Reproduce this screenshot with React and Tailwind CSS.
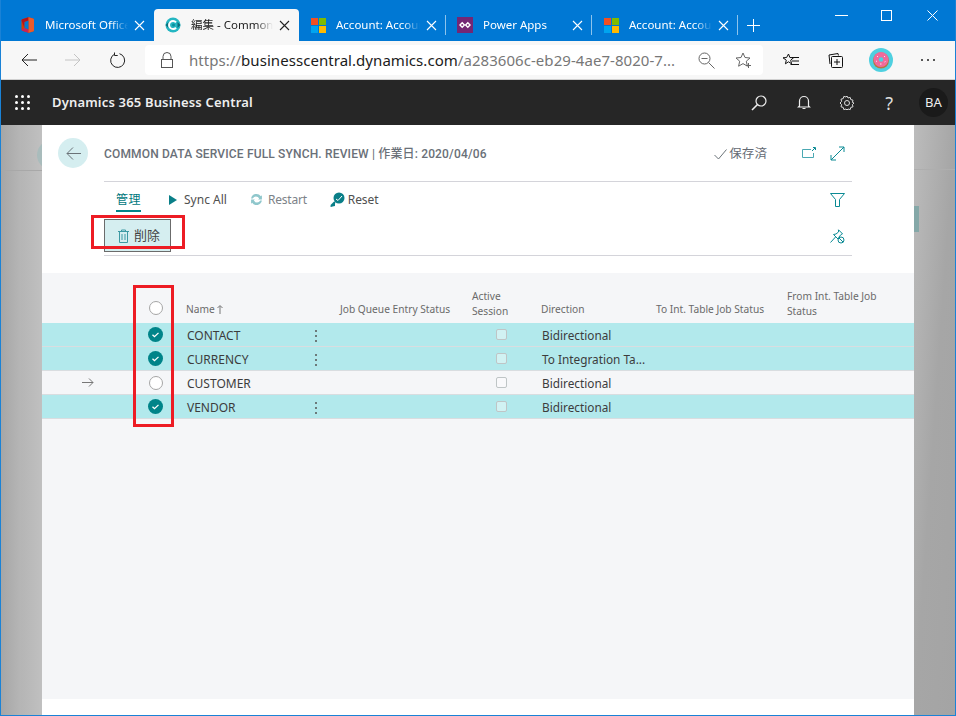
import React from "react";

const sans = "font-['Noto_Sans','Noto_Sans_CJK_JP',sans-serif]";

function X({ c = "#fff" }) {
  return (
    <svg width="11" height="11" viewBox="0 0 11 11" className="shrink-0">
      <path d="M1 1l9 9M10 1l-9 9" stroke={c} strokeWidth="1.1" fill="none" />
    </svg>
  );
}

function MsLogo() {
  return (
    <svg width="15" height="15" viewBox="0 0 15 15" className="shrink-0">
      <rect width="7" height="7" fill="#f25022" />
      <rect x="8" width="7" height="7" fill="#7fba00" />
      <rect y="8" width="7" height="7" fill="#00a4ef" />
      <rect x="8" y="8" width="7" height="7" fill="#ffb900" />
    </svg>
  );
}

function OfficeLogo() {
  return (
    <svg width="13" height="16" viewBox="0 0 13 16" className="shrink-0">
      <path d="M0.500 3.500Q0.500 2.700 1.300 2.300L7.500 0.300L12 1.500Q13 1.800 13 2.800V13.200Q13 14.200 12 14.500L7.500 15.700L1.300 13.700Q0.500 13.300 0.500 12.500z" fill="#d83b01" />
      <path d="M0.500 3.500Q0.500 2.700 1.300 2.300L7.500 0.300V3.500L3.500 5V11z" fill="#b5121b" />
      <path d="M0.500 12.500L3.500 11L7.500 12.500V15.700L1.300 13.700Q0.500 13.300 0.500 12.500z" fill="#c7235a" />
      <path d="M7.500 0.300L12 1.500Q13 1.800 13 2.800V13.200Q13 14.200 12 14.500L7.500 15.700z" fill="#eb5b2a" />
      <path d="M3.500 5L7.500 3.500V12.500L3.500 11z" fill="#0078d4" />
    </svg>
  );
}

function BcLogo() {
  return (
    <svg width="16" height="16" viewBox="0 0 16 16" className="shrink-0">
      <circle cx="8" cy="8" r="7.500" fill="#25b6c2" />
      <path d="M0.500 8L3.500 5V11zM15.500 8L12.500 5V11z" fill="#0b6f7c" />
      <path d="M11 5.300A4 4 0 1 0 11 10.700" stroke="#fff" strokeWidth="2" fill="none" />
      <circle cx="8.500" cy="8" r="1.500" fill="#0b8f9c" />
    </svg>
  );
}

function PowerLogo() {
  return (
    <svg width="16" height="16" viewBox="0 0 16 16" className="shrink-0">
      <rect width="16" height="16" fill="#742774" />
      <path d="M3 8l2.200-2.200L7.400 8l-2.200 2.200zM8.600 8l2.200-2.200L13 8l-2.200 2.200z" fill="none" stroke="#fff" strokeWidth="1.400" />
    </svg>
  );
}

function Tab({ w, logo, title, active, sep }) {
  return (
    <div
      className={
        "relative flex h-[32px] shrink-0 items-center rounded-t-[4px] pl-[4px] pr-[9px] " +
        (active ? "bg-[#f7f7f7] text-[#222]" : "text-white")
      }
      style={{ width: w }}
    >
      <div className="flex w-[30px] shrink-0 items-center justify-center">{logo}</div>
      <span className="min-w-0 flex-1 overflow-hidden whitespace-nowrap pl-[3px] text-[11.500px] leading-[16px] [mask-image:linear-gradient(to_right,black_80%,transparent)]">{title}</span>
      <div className="ml-[6px]">
        <X c={active ? "#222" : "#fff"} />
      </div>
      {sep && <div className="absolute right-0 top-[6px] h-[20px] w-px bg-[#8dc4ec]" />}
    </div>
  );
}

function Donut() {
  return (
    <svg width="24" height="24" viewBox="0 0 24 24">
      <circle cx="12" cy="12" r="12" fill="#4fd0e0" />
      <circle cx="12" cy="12.500" r="8" fill="#b5763f" />
      <circle cx="12" cy="11.500" r="7.500" fill="#f06a9b" />
      <circle cx="12" cy="11.500" r="2.300" fill="#4fd0e0" />
      <path d="M8 8l1 1M15 8l1 1M7 13l1 .5M15.500 14l1-.5M11 16l1.500 0" stroke="#fff" strokeWidth="0.800" />
    </svg>
  );
}

function Stroke({ w, h, vb, d, c = "#0a8a94", sw = 1, className = "" }) {
  return (
    <svg width={w} height={h} viewBox={vb || `0 0 ${w} ${h}`} className={"shrink-0 " + className}>
      <path d={d} stroke={c} strokeWidth={sw} fill="none" />
    </svg>
  );
}

function RadioOff() {
  return <div className="h-[14px] w-[14px] rounded-full border border-[#a6a6a6] bg-white" />;
}
function RadioOn() {
  return (
    <svg width="15" height="15" viewBox="0 0 15 15">
      <circle cx="7.500" cy="7.500" r="7.500" fill="#008489" />
      <path d="M4.500 7.700l2 2 4-3.800" stroke="#fff" strokeWidth="1.300" fill="none" />
    </svg>
  );
}
function Box() {
  return <div className="h-[11px] w-[11px] rounded-[2px] border border-[#bfc5c6] bg-white/40" />;
}

const rows = [
  { name: "CONTACT", dir: "Bidirectional", sel: true },
  { name: "CURRENCY", dir: "To Integration Ta...", sel: true },
  { name: "CUSTOMER", dir: "Bidirectional", sel: false, cur: true },
  { name: "VENDOR", dir: "Bidirectional", sel: true },
];

const grid = "grid grid-cols-[93px_43px_127px_23px_132px_70px_114px_131px_1fr]";

export default function App() {
  return (
    <div className={"relative flex h-[716px] w-[956px] flex-col overflow-hidden border-x border-b border-[#1a82d6] bg-[#0078d4] " + sans}>
      {/* Browser tabs */}
      <div className="flex h-[41px] shrink-0 items-end bg-[#0078d4] pl-[7px]">
        <Tab w={146} logo={<OfficeLogo />} title="Microsoft Office Home" />
        <Tab w={145} logo={<BcLogo />} title="編集 - Common Data Service" active />
        <Tab w={147} logo={<MsLogo />} title="Account: Account Details" sep />
        <Tab w={146} logo={<PowerLogo />} title="Power Apps" sep />
        <Tab w={146} logo={<MsLogo />} title="Account: Account Details" sep />
        <div className="flex h-[31px] w-[30px] items-center justify-center">
          <Stroke w={13} h={13} c="#fff" d="M6.500 0v13M0 6.500h13" />
        </div>
        <div className="ml-auto flex h-[41px] self-start">
          <div className="flex h-[30px] w-[45px] items-center justify-center">
            <Stroke w={13} h={11} c="#fff" d="M0 5.500h13" />
          </div>
          <div className="flex h-[30px] w-[46px] items-center justify-center">
            <div className="h-[11px] w-[11px] -translate-x-[1px] border border-white" />
          </div>
          <div className="flex h-[30px] w-[45px] items-center justify-center">
            <Stroke w={11} h={11} c="#fff" d="M0.500 0.500l10 10M10.500 0.500l-10 10" />
          </div>
        </div>
      </div>

      {/* Address toolbar */}
      <div className="flex h-[39px] shrink-0 items-center border-b border-[#d0d0d0] bg-[#f7f7f7]">
        <div className="flex w-[144px] shrink-0 items-center">
          <div className="flex w-[56px] justify-center">
            <Stroke w={16} h={14} c="#222" d="M16 7H1M7 1L1 7l6 6" />
          </div>
          <div className="flex w-[32px] justify-center">
            <Stroke w={16} h={14} c="#c4c4c4" d="M0 7h15M9 1l6 6-6 6" />
          </div>
          <div className="flex w-[56px] justify-center">
            <svg width="17" height="17" viewBox="0 0 17 17">
              <path d="M5.500 2.200A7 7 0 1 0 10.500 1.700M5.500 0.500v3h3.200" stroke="#222" strokeWidth="1" fill="none" />
            </svg>
          </div>
        </div>
        <div className="flex h-[30px] w-[618px] shrink-0 items-center rounded-[4px] bg-white">
          <div className="flex w-[44px] shrink-0 justify-center">
            <svg width="14" height="17" viewBox="0 0 14 17">
              <path d="M3 7V4.500a4 4 0 0 1 8 0V7" stroke="#555" fill="none" />
              <rect x="1.500" y="7.500" width="11" height="8" stroke="#555" fill="none" />
            </svg>
          </div>
          <div className="min-w-0 flex-1 whitespace-nowrap text-[15px] tracking-[0.05px] text-[#777]">
            https://<span className="text-[#1b1b1b]">businesscentral.dynamics.com</span>/a283606c-eb29-4ae7-8020-7...
          </div>
          <div className="flex shrink-0 items-center pr-[11px]">
            <svg width="17" height="17" viewBox="0 0 17 17" className="mr-[21px]">
              <circle cx="6.500" cy="6.500" r="5.500" stroke="#666" fill="none" />
              <path d="M3.500 6.500h6M10.500 10.500l6 6" stroke="#666" fill="none" />
            </svg>
            <svg width="16" height="16" viewBox="0 0 16 16">
              <path d="M7 1l2 4.500 5 .5-3.700 3.200 1.100 5L7 11.600 2.600 14.200l1.100-5L0 6l5-.5z" stroke="#666" fill="none" />
              <path d="M12.500 11v5M10 13.500h5" stroke="#666" fill="none" />
            </svg>
          </div>
        </div>
        <div className="flex flex-1 items-center">
          <svg width="16" height="15" viewBox="0 0 16 15" className="ml-[20px]">
            <path d="M5.500 1l1.400 3.500 3.600.3-2.800 2.400.9 3.600-3.100-2-3.100 2 .9-3.600L0 4.800l3.600-.3z" stroke="#111" fill="#f7f7f7" />
            <path d="M8.500 4.500H16M9 8h7M7.500 11.500H16" stroke="#111" fill="none" />
          </svg>
          <svg width="16" height="16" viewBox="0 0 16 16" className="ml-[29px]">
            <path d="M2 12L1 3l9-1.500.4 2" stroke="#111" fill="none" />
            <rect x="3.500" y="4.500" width="11" height="11" rx="1" stroke="#111" fill="#f7f7f7" />
            <path d="M9 7v6M6 10h6" stroke="#111" fill="none" />
          </svg>
          <div className="ml-[25px]"><Donut /></div>
          <div className="ml-[28px] flex gap-[4px]">
            <span className="h-[2px] w-[2px] rounded-full bg-[#222]" />
            <span className="h-[2px] w-[2px] rounded-full bg-[#222]" />
            <span className="h-[2px] w-[2px] rounded-full bg-[#222]" />
          </div>
        </div>
      </div>

      {/* App bar */}
      <div className="flex h-[45px] shrink-0 items-center bg-[#262626] text-white">
        <div className="ml-[14px] grid w-[15px] grid-cols-3 gap-[3px]">
          {Array.from({ length: 9 }).map((_, i) => (
            <span key={i} className="h-[3px] w-[3px] rounded-full bg-white" />
          ))}
        </div>
        <div className="ml-[22px] text-[13px] font-semibold tracking-[0.17px] text-[#eee]">Dynamics 365 Business Central</div>
        <div className="ml-auto flex items-center">
          <svg width="16" height="16" viewBox="0 0 16 16">
            <circle cx="10" cy="6" r="5" stroke="#eee" strokeWidth="1.200" fill="none" />
            <path d="M6.500 9.500L1 15" stroke="#eee" strokeWidth="1.600" fill="none" />
          </svg>
          <svg width="14" height="15" viewBox="0 0 14 15" className="ml-[30px]">
            <path d="M2.500 11V6a4.500 4.500 0 0 1 9 0v5l1 1H1.500zM5.500 13.500h3" stroke="#eee" strokeWidth="1.200" fill="none" />
          </svg>
          <svg width="16" height="16" viewBox="0 0 16 16" className="ml-[28px]">
            <circle cx="8" cy="8" r="2.500" stroke="#ddd" fill="none" />
            <path d="M8 1l1 2 2.200-.6.600 2.200 2.200.6-.6 2.200L15 8l-1.600 1.600.6 2.200-2.200.6-.6 2.200-2.200-.6L8 15l-1-1.000-2.200.6-.6-2.200-2.200-.6.6-2.200L1 8l1.600-1.600L2 4.200l2.200-.6.600-2.200 2.200.6z" stroke="#ddd" fill="none" />
          </svg>
          <span className="ml-[30px] text-[18px] leading-none text-[#ddd]">?</span>
          <div className="ml-[26px] mr-[7px] flex h-[29px] w-[29px] items-center justify-center rounded-full bg-[#1a1a1a] text-[13px] text-[#eee]">BA</div>
        </div>
      </div>

      {/* Page under the dialog */}
      <div className="relative flex min-h-0 flex-1 bg-[#b0b0b0]">
        <div className="relative flex w-[41px] shrink-0">
          <div className="w-[20px] bg-gradient-to-r from-[#a6a6a6] to-[#b6b6b6]" />
          <div className="flex-1 bg-gradient-to-r from-[#b5b5b5] to-[#c0c0c0]" />
          <div className="absolute inset-x-0 top-[45px] h-px bg-[#a8a8a8]" />
          <div className="absolute left-[36px] top-[15px] h-[30px] w-[30px] rounded-full bg-[#a9bcbc]" />
        </div>

        {/* Dialog */}
        <div className="relative z-10 flex w-[872px] shrink-0 flex-col bg-white">
          <div className="flex h-[56px] shrink-0 items-center pl-[16px] pr-[69px]">
            <div className="flex h-[30px] w-[30px] items-center justify-center rounded-full bg-[#d5eef0]">
              <Stroke w={15} h={13} c="#6b7378" d="M15 6.500H1M7 .5L1 6.500l6 6" />
            </div>
            <div className="ml-[16px] translate-y-[1px] whitespace-nowrap font-['Roboto','Noto_Sans_CJK_JP',sans-serif] text-[12px] font-medium tracking-[0.16px] text-[#6a7078]">
              COMMON DATA SERVICE FULL SYNCH. REVIEW | 作業日: 2020/04/06
            </div>
            <div className="ml-auto flex items-center">
              <Stroke w={13} h={11} c="#6b7378" d="M0.500 6l4 4L12.500 0.500" className="translate-x-[1px] translate-y-[1px]" />
              <span className="ml-[3px] translate-y-[1px] text-[12.500px] tracking-[0.1px] text-[#646a73]">保存済</span>
              <svg width="14" height="12" viewBox="0 0 14 12" className="ml-[34px] translate-x-[1px]">
                <path d="M9 2.500H.5v8h11V6" stroke="#4aa8b2" fill="none" />
                <path d="M10 4l3-3M11 .5h2.500V3" stroke="#0a8a94" fill="none" />
              </svg>
              <svg width="15" height="15" viewBox="0 0 15 15" className="ml-[15px]">
                <path d="M1 14L14 1M9 1h5v5M1 9v5h5" stroke="#0a8a94" strokeWidth="1" fill="none" />
              </svg>
            </div>
          </div>

          <div className="mx-[62px] h-[75px] shrink-0 border-y border-[#d4d4da]">
            <div className="flex h-[37px] items-center pb-[2px] pl-[12px] pr-[7px] text-[12px] text-[#505050]">
              <div className="relative text-[#00787d]">
                <span className="tracking-[0.5px]">管理</span>
                <div className="absolute -bottom-[3px] left-0 right-0 h-[2px] bg-[#008489]" />
              </div>
              <svg width="8" height="10" viewBox="0 0 8 10" className="ml-[28px]">
                <path d="M0 0l8 5-8 5z" fill="#0a7f88" />
              </svg>
              <span className="ml-[7px]">Sync All</span>
              <svg width="13" height="13" viewBox="0 0 12 12" className="ml-[23px]">
                <path d="M1 5A5 5 0 0 1 10 3l1-1v4H7.500l1-1A3.500 3.500 0 0 0 2.500 5zM11 7A5 5 0 0 1 2 9l-1 1V6h3.500l-1 1a3.500 3.500 0 0 0 6 0z" fill="#8fc7cc" />
              </svg>
              <span className="ml-[5px] tracking-[-0.2px] text-[#7c8288]">Restart</span>
              <svg width="15" height="15" viewBox="0 0 15 15" className="ml-[23px]">
                <circle cx="9" cy="6" r="5.500" fill="#0a7f88" />
                <path d="M6 7l2 1.500L12 4" stroke="#fff" fill="none" />
                <path d="M0 15l5-1V9.500z" fill="#0a7f88" />
                <path d="M1 14l4-4" stroke="#0a7f88" strokeWidth="2" />
              </svg>
              <span className="ml-[3px] tracking-[-0.1px]">Reset</span>
              <svg width="15" height="14" viewBox="0 0 15 14" className="ml-auto">
                <path d="M.5 .5h14L9.500 6.500V13.500h-4V6.500z" stroke="#0a8a94" fill="none" />
              </svg>
            </div>
            <div className="flex h-[36px] items-start pr-[7px]">
              <div className="flex h-[33px] w-[67px] items-center gap-[5px] border border-[#6b6b6b] bg-[#d5eef0] pl-[13px] text-[13px] text-[#444]">
                <svg width="11" height="14" viewBox="0 0 11 14" className="shrink-0">
                  <path d="M0 2.500h11M3.500 2.500V1h4v1.500M1.500 2.500v11h8v-11M4 5v6M7 5v6" stroke="#3d9aa4" fill="none" />
                </svg>
                <span className="whitespace-nowrap">削除</span>
              </div>
              <svg width="15" height="15" viewBox="0 0 15 15" className="ml-auto mt-[10px]">
                <path d="M8.500 .8l4 4-1.500.7-2 2.500-.5 2.500L3.500 5.500 6 5l2.500-2zM5.500 8l-5 5.500" stroke="#0a8a94" fill="none" />
                <circle cx="11" cy="11" r="3" stroke="#0a8a94" fill="#fff" />
                <path d="M9 9l4 4" stroke="#0a8a94" />
              </svg>
            </div>
          </div>

          <div className="h-[17px] shrink-0" />

          {/* List */}
          <div className="flex min-h-0 flex-1 flex-col bg-[#f5f6f8]">
            <div className={grid + " h-[50px] shrink-0 text-[10.200px] leading-[15px] text-[#6a6a6a]"}>
              <div />
              <div className="flex -translate-x-[1px] items-center justify-center pt-[20px]">
                <RadioOff />
              </div>
              <div className="flex items-center gap-[2px] self-end pb-[6px] pl-[8px]">
                Name
                <Stroke w={6} h={9} c="#777" d="M3 9V1M.5 3L3 .5 5.500 3" />
              </div>
              <div />
              <div className="self-end pb-[6px] pl-[12px]">Job Queue Entry Status</div>
              <div className="self-end pb-[4px] pl-[12px]">Active<br />Session</div>
              <div className="self-end pb-[6px] pl-[11px]">Direction</div>
              <div className="self-end pb-[6px] pl-[12px]">To Int. Table Job Status</div>
              <div className="self-end pb-[4px] pl-[12px]">From Int. Table Job<br />Status</div>
            </div>
            {rows.map((r) => (
              <div
                key={r.name}
                className={grid + " h-[24px] shrink-0 items-center border-b border-[#d9dde0] text-[12px] text-[#3c3c3c] " + (r.sel ? "bg-[#b2e9ec]" : "bg-[#f5f6f8]")}
              >
                <div className="flex -translate-x-[1px] justify-center">
                  {r.cur && <Stroke w={12} h={9} c="#777" d="M0 4.500h11M7 .5l4 4-4 4" />}
                </div>
                <div className="flex -translate-x-[1px] justify-center">{r.sel ? <RadioOn /> : <RadioOff />}</div>
                <div className="pl-[9px] pt-[2px]">{r.name}</div>
                <div className="flex -translate-x-[1px] flex-col items-center gap-[3px] pt-[2px]">
                  {r.sel && (
                    <>
                      <span className="h-[2px] w-[2px] rounded-full bg-[#555]" />
                      <span className="h-[2px] w-[2px] rounded-full bg-[#555]" />
                      <span className="h-[2px] w-[2px] rounded-full bg-[#555]" />
                    </>
                  )}
                </div>
                <div />
                <div className="flex justify-center pl-[12px]"><Box /></div>
                <div className="whitespace-nowrap pl-[12px] pt-[2px] text-[11.800px]">{r.dir}</div>
                <div />
                <div />
              </div>
            ))}
          </div>
          <div className="h-[16px] shrink-0" />
        </div>

        <div className="relative flex-1 bg-gradient-to-br from-[#bcbcbc] via-[#a6a6a6] to-[#a4a4a4]">
          <div className="h-[45px] border-b border-[#aeaeae]" />
          <div className="absolute left-0 top-[81px] h-[26px] w-[5px] bg-[#85a8a8]" />
        </div>
      </div>

      {/* Red annotation boxes */}
      <div className="pointer-events-none absolute left-[90px] top-[215px] z-20 h-[34px] w-[94px] border-[3px] border-[#ed1c24]" />
      <div className="pointer-events-none absolute left-[132px] top-[285px] z-20 h-[142px] w-[41px] border-[3px] border-[#ed1c24]" />
    </div>
  );
}
